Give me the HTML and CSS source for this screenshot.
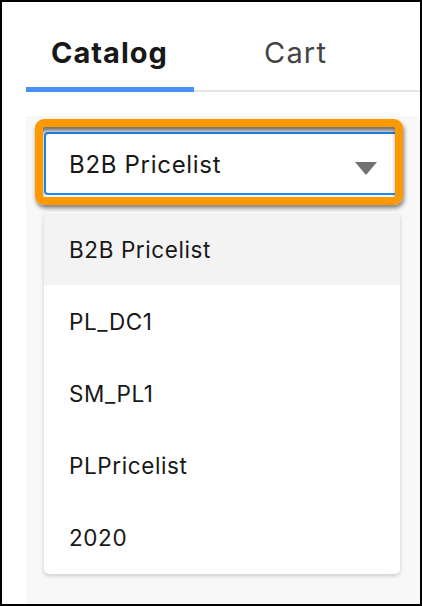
FILE: index.html
```html
<!DOCTYPE html>
<html lang="en">
<head>
<meta charset="utf-8">
<title>Catalog</title>
<link rel="stylesheet" href="styles.css">
</head>
<body>
<div class="frame">
  <div class="tabs">
    <div class="tab tab-active">Catalog</div>
    <div class="tab">Cart</div>
  </div>
  <div class="panel">
    <div class="select">
      <span class="select-value">B2B Pricelist</span>
      <span class="caret"></span>
    </div>
    <ul class="menu">
      <li class="menu-item is-hover">B2B Pricelist</li>
      <li class="menu-item">PL_DC1</li>
      <li class="menu-item">SM_PL1</li>
      <li class="menu-item">PLPricelist</li>
      <li class="menu-item">2020</li>
    </ul>
    <div class="highlight"></div>
  </div>
</div>
</body>
</html>
```
FILE: styles.css
```css
* { box-sizing: border-box; }
html, body { margin: 0; padding: 0; background: #fff; }
body { font-family: Inter, "Liberation Sans", Arial, sans-serif; color: #181818; }

.frame {
  width: 422px;
  height: 606px;
  border: 2px solid #000;
  padding-left: 24px;
  display: flex;
  flex-direction: column;
  overflow: hidden;
}

.tabs {
  display: flex;
  height: 90px;
  border-bottom: 2px solid #e5e5e5;
  margin-bottom: 24px;
}
.tab {
  font-size: 29px;
  line-height: 34px;
  padding-top: 34px;
  color: #444;
  height: 90px;
  letter-spacing: 1.2px;
}
.tab-active {
  width: 168px;
  padding-left: 25px;
  font-weight: 700;
  color: #181818;
  border-bottom: 5px solid #4592f0;
  margin-bottom: -2px;
  height: 90px;
  letter-spacing: 1px;
}
.tab + .tab { padding-left: 70px; }

.panel {
  position: relative;
  flex: 1;
  background: #f8f8f8;
  padding: 16px 20px 0 18px;
}

.select {
  display: flex;
  justify-content: space-between;
  align-items: flex-start;
  height: 63px;
  background: #fff;
  border: 2px solid #1b8cf0;
  border-radius: 4px;
  padding: 17px 21px 14px 23px;
}
.select-value {
  font-size: 24px;
  line-height: 28px;
  letter-spacing: 0.7px;
}
.caret {
  margin-top: 11px;
  width: 0;
  height: 0;
  border-left: 11px solid transparent;
  border-right: 11px solid transparent;
  border-top: 13px solid #727272;
}

.menu {
  list-style: none;
  margin: 17px 0 0 0;
  padding: 1px 0;
  background: #fff;
  border-radius: 5px;
  box-shadow: 0 2px 4px rgba(0,0,0,0.18);
}
.menu-item {
  height: 72px;
  display: flex;
  align-items: center;
  padding-left: 25px;
  font-size: 22.5px;
  letter-spacing: 0.6px;
}
.menu-item.is-hover { background: #f3f3f3; }

.highlight {
  position: absolute;
  left: 9px;
  top: 3px;
  width: 368px;
  height: 86px;
  border: 8px solid #ff9900;
  border-radius: 9px;
  box-shadow: 1px 3px 4px rgba(0,0,0,0.5), inset 0 5px 4px -1px rgba(0,0,0,0.55);
}
```
